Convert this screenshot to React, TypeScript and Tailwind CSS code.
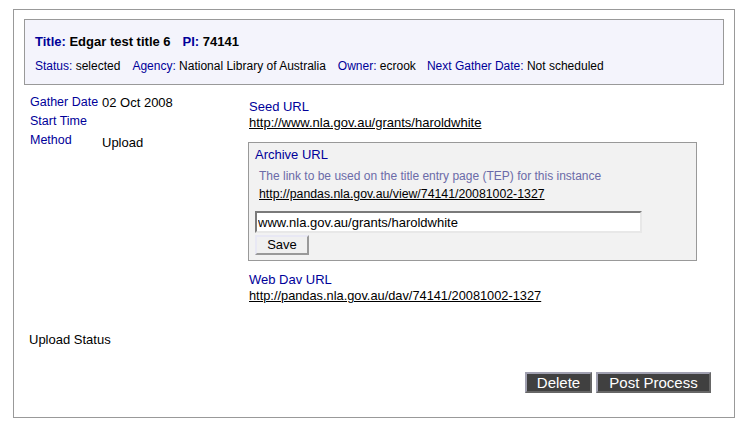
import React from "react";

const font = { fontFamily: '"Liberation Sans", Arial, sans-serif' };

export default function App() {
  return (
    <div className="w-[745px] h-[428px] bg-white text-black" style={font}>
      <div className="ml-[13px] mt-[9px] w-[722px] h-[409px] box-border border border-[#999] px-[10px] pt-[9px]">
        {/* Header */}
        <div className="h-[66px] box-border border border-[#999] bg-[#f4f4fc] pl-[10px] pt-[14px]">
          <div className="text-[13px] font-bold leading-[16px] whitespace-nowrap">
            <span className="text-[#000099]">Title:</span> Edgar test title 6
            <span className="ml-[12px] text-[#000099]">PI:</span> 74141
          </div>
          <div className="mt-[8px] text-[12px] leading-[16px] whitespace-nowrap">
            <span className="text-[#000099]">Status:</span> selected
            <span className="ml-[12px] text-[#000099]">Agency:</span> National Library of Australia
            <span className="ml-[12px] text-[#000099]">Owner:</span> ecrook
            <span className="ml-[11px] text-[#000099]">Next Gather Date:</span> Not scheduled
          </div>
        </div>

        {/* Body */}
        <div className="flex text-[13px]">
          <div className="w-[224px] pl-[6px] pt-[8px]">
            <div className="grid grid-cols-[72px_auto] leading-[19px]">
              <div className="text-[#000099] text-[12.5px]">Gather Date</div>
              <div>02 Oct 2008</div>
              <div className="text-[#000099] text-[12.5px]">Start Time</div>
              <div></div>
              <div className="text-[#000099] text-[12.5px]">Method</div>
              <div className="pt-[2px]">Upload</div>
            </div>
          </div>
          <div className="flex-1 pt-[14px] leading-[16px]">
            <div className="pl-[1px] text-[#000099]">Seed URL</div>
            <div className="pl-[1px]">
              <a className="underline text-black">http://www.nla.gov.au/grants/haroldwhite</a>
            </div>
            <div className="mt-[11px] w-[449px] h-[119px] box-border border border-[#999] bg-[#f2f2f2] pl-[6px] pt-[4px]">
              <div className="text-[#000099]">Archive URL</div>
              <div className="mt-[5px] pl-[4px] text-[12px] text-[#6b6ba8]">
                The link to be used on the title entry page (TEP) for this instance
              </div>
              <div className="mt-[2px] pl-[4px] text-[12.3px]">
                <a className="underline text-black">http://pandas.nla.gov.au/view/74141/20081002-1327</a>
              </div>
              <input
                readOnly
                value="www.nla.gov.au/grants/haroldwhite"
                className="mt-[9px] block w-[387px] h-[22px] box-border border-2 border-t-[#7a7a7a] border-l-[#7a7a7a] border-b-[#e8e8e8] border-r-[#e8e8e8] bg-white px-[1px] text-[13px] text-black outline-none"
                style={font}
              />
              <button
                className="mt-[2px] block w-[54px] h-[20px] box-border border-2 border-t-[#e8e8f4] border-l-[#e8e8f4] border-b-[#999] border-r-[#999] bg-[#f0f0f0] text-[13px] leading-[14px] text-black"
                style={font}
              >
                Save
              </button>
            </div>
            <div className="mt-[11px] pl-[1px] text-[#000099]">Web Dav URL</div>
            <div className="pl-[1px] text-[12.8px]">
              <a className="underline text-black">http://pandas.nla.gov.au/dav/74141/20081002-1327</a>
            </div>
          </div>
        </div>

        <div className="mt-[28px] pl-[5px] text-[13px] leading-[16px]">Upload Status</div>

        <div className="mt-[24px] mr-[13px] flex justify-end gap-[4px]">
          <button
            className="w-[67px] h-[21px] box-border border-2 border-t-[#a0a0b0] border-l-[#a0a0b0] border-b-[#666] border-r-[#666] bg-[#404040] text-[15px] leading-[16px] text-white"
            style={font}
          >
            Delete
          </button>
          <button
            className="w-[115px] h-[21px] box-border border-2 border-t-[#a0a0b0] border-l-[#a0a0b0] border-b-[#666] border-r-[#666] bg-[#404040] text-[15px] leading-[16px] text-white"
            style={font}
          >
            Post Process
          </button>
        </div>
      </div>
    </div>
  );
}
